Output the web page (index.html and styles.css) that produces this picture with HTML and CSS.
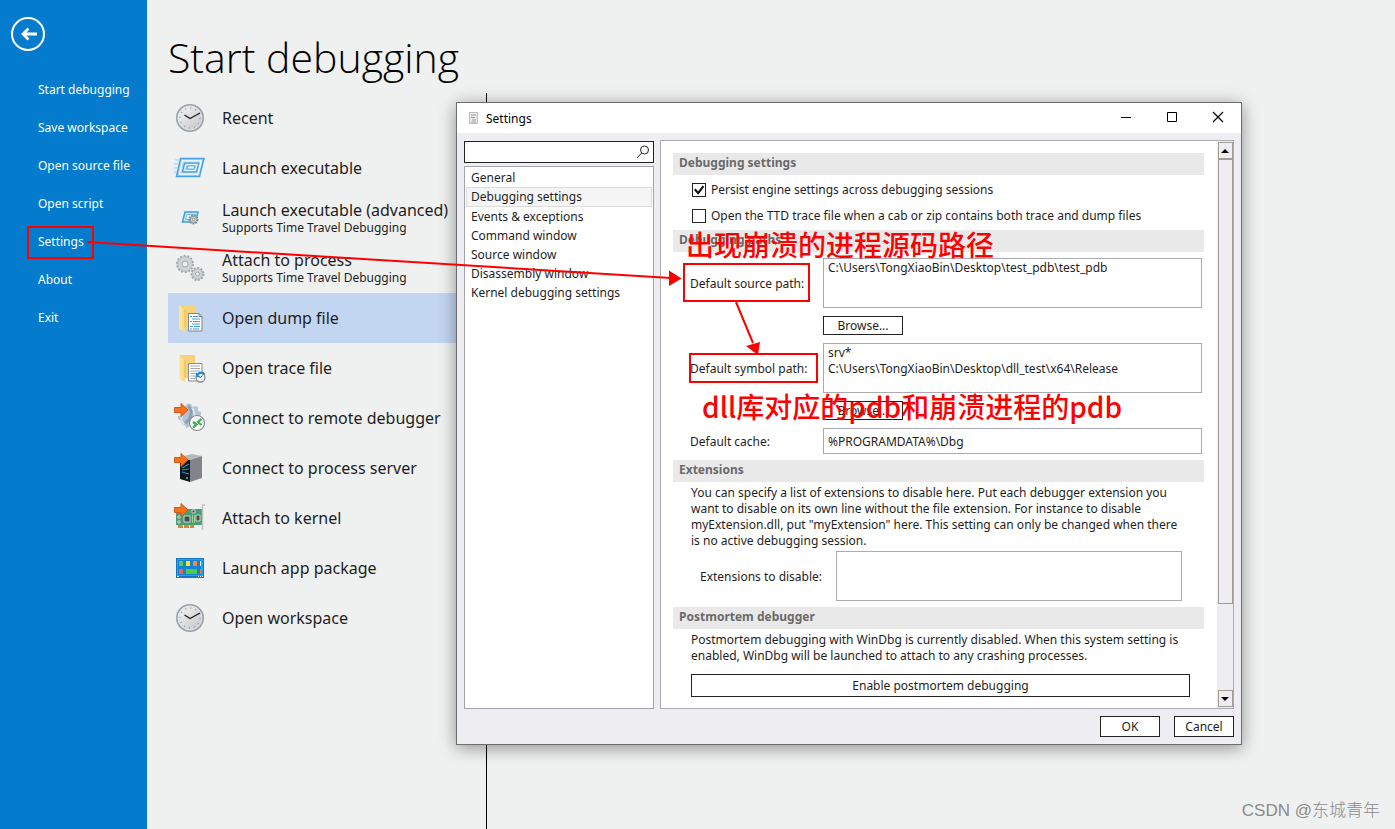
FILE: index.html
```html
<!DOCTYPE html>
<html lang="en">
<head>
<meta charset="utf-8">
<title>Start debugging</title>
<link rel="stylesheet" href="styles.css">
</head>
<body>
<div class="app">
  <nav class="sidebar">
    <button class="back" aria-label="Back">
      <svg width="34" height="34" viewBox="0 0 34 34"><circle cx="17" cy="17" r="16" fill="none" stroke="#fff" stroke-width="2"/><path d="M26 17H12M17.500 11.500L12 17L17.500 22.500" fill="none" stroke="#fff" stroke-width="2.800"/></svg>
    </button>
    <a href="#">Start debugging</a>
    <a href="#">Save workspace</a>
    <a href="#">Open source file</a>
    <a href="#">Open script</a>
    <a href="#">Settings</a>
    <a href="#">About</a>
    <a href="#">Exit</a>
  </nav>
  <main class="main">
    <h1>Start debugging</h1>
    <div class="columns">
      <div class="tasks">
        <button class="task"><svg class="icon"><use href="#clock"/></svg><span>Recent</span></button>
        <button class="task">
          <svg class="icon" viewBox="0 0 32 32"><g fill="none"><path d="M6.500 6.500H30L25.500 24.500H2.500Z" fill="#a8d6f5" stroke="#49a3e2" stroke-width="1.500"/><path d="M8.500 8.800H27.200L24 22.200H5.500Z" stroke="#fff" stroke-width="1.200"/><path d="M10.500 11H25L22.500 20H8.500Z" fill="#9dd0f3" stroke="#3797dc"/><path d="M12 12.500H23.200L21.200 18.500H10.500Z" stroke="#e4f3fc"/><path d="M14 14H21L20 17H13Z" fill="#fff" stroke="#58aee8"/><path d="M1 8h5M0 12h5M0 16h4M0 20h3" stroke="#9bcff4"/></g></svg>
          <span>Launch executable</span></button>
        <button class="task">
          <svg class="icon" viewBox="0 0 32 32"><path d="M11 10H24L21.500 20H8.500Z" fill="#c5e5f9" stroke="#3d9fe0" stroke-width="1.500"/><path d="M13 12.500H21L19.500 17.500H11.500Z" fill="#eaf6fd" stroke="#74bbea"/><g transform="translate(19.500 17.500)"><circle r="4" fill="#cfd4d6" stroke="#7f8689" stroke-width="2" stroke-dasharray="1.700 1"/><circle r="3.200" fill="#d9dddf" stroke="#899093"/><circle r="1.300" fill="#fff" stroke="#7f8689"/></g></svg>
          <span>Launch executable (advanced)<small>Supports Time Travel Debugging</small></span></button>
        <button class="task">
          <svg class="icon" viewBox="0 0 32 32"><g fill="#cfd5d7" stroke="#9ea5a8"><circle cx="11" cy="12" r="8" stroke-width="2" stroke-dasharray="2 1.600"/><circle cx="11" cy="12" r="7" stroke="#bfc5c8"/><circle cx="11" cy="12" r="3" fill="#f0f1f1"/><circle cx="23.500" cy="22" r="6" stroke-width="2" stroke-dasharray="2 1.400"/><circle cx="23.500" cy="22" r="5" stroke="#b5bbbe"/><circle cx="23.500" cy="22" r="2" fill="#f0f1f1"/></g></svg>
          <span>Attach to process<small>Supports Time Travel Debugging</small></span></button>
        <button class="task selected">
          <svg class="icon" viewBox="0 0 32 32"><use href="#folder"/><path d="M14.500 11.500H25L28 14.500V29H14.500Z" fill="#fff" stroke="#7d8184"/><path d="M25 11.500V14.500H28" fill="none" stroke="#7d8184"/><path d="M16 14.500h2M19 14.500h5M18 17h8M16 19.500h2M19 19.500h7M18 22h8M16 24.500h3M20 24.500h6M16 27h2M19 27h6" stroke="#3f9be0" stroke-width="1.200"/></svg>
          <span>Open dump file</span></button>
        <button class="task">
          <svg class="icon" viewBox="0 0 32 32"><use href="#folder"/><path d="M14.500 11.500H28V29H14.500Z" fill="#fff" stroke="#85898c"/><path d="M16.500 14h9.500M16.500 16.500h9.500M16.500 19h9.500M16.500 21.500h7M16.500 24h5M16.500 26.500h5" stroke="#a5a8aa"/><circle cx="26.500" cy="25.500" r="4.500" fill="#eef1f3" stroke="#858b90" stroke-width="1.300"/><path d="M26.500 25.500l2-2M26.500 25.500l-2-1" stroke="#555"/><path d="M24 22.500c1-2 4-3 6.500 0" fill="none" stroke="#2787d1" stroke-width="2.200"/><path d="M22 20v5h4z" fill="#2787d1"/></svg>
          <span>Open trace file</span></button>
        <button class="task">
          <svg class="icon" viewBox="0 0 32 32"><path d="M12 3l2-1.500 3 .5 1 3 3-1 3 1v4l3 1v3l-6 2-5 5-1 5-3 1-1-3-3-1-2-4-2-1v-3h3l1-4z" fill="#b5c3d2"/><path d="M14 4c5 4 4 12-3 17" fill="none" stroke="#8ea0b3" stroke-width="3"/><path d="M18 6c3 3 3 5 2 8M8 14c-1 3 0 6 2 8" fill="none" stroke="#dbe4eb" stroke-width="2"/><use href="#arrow"/><circle cx="23" cy="21" r="7.500" fill="#fff" stroke="#888" stroke-width="1.200"/><path d="M19 20l3.500 2.500-3.500 3M27.500 17l-3.500 3 3.500 3" fill="none" stroke="#32b34a" stroke-width="2.300"/></svg>
          <span>Connect to remote debugger</span></button>
        <button class="task">
          <svg class="icon" viewBox="0 0 32 32"><path d="M6 5L18 2L28 4L16 8Z" fill="#b6b9bc"/><path d="M6 6L16 8V30L6 27Z" fill="#111519"/><path d="M16 8L28 4V26L16 30Z" fill="#81858b"/><path d="M8 16l7-4M8 18l7-1M8 20l7 2" stroke="#218bc9" stroke-width="1.200"/><circle cx="13" cy="26" r="1" fill="#37c9e8"/><use href="#arrow"/></svg>
          <span>Connect to process server</span></button>
        <button class="task">
          <svg class="icon" viewBox="0 0 32 32"><path d="M2 7H28V23H2Z" fill="#4c9c78"/><path d="M4 24.500H20" stroke="#d18a35" stroke-width="3" stroke-dasharray="5 1"/><path d="M10 14h6v6h-6zM22 13h4v6h-4zM18 8h3v3h-3z" fill="#444b4c" stroke="#c7d5cf"/><path d="M4 14h2v2H4zM4 19h2v2H4z" fill="#333" stroke="#d7e8d6"/><path d="M18.500 13v8M20.500 13v8" stroke="#9bd091"/><path d="M31 3h-2.500v25" fill="none" stroke="#bfc2c3" stroke-width="1.500"/><use href="#arrow"/></svg>
          <span>Attach to kernel</span></button>
        <button class="task">
          <svg class="icon" viewBox="0 0 32 32"><path d="M2 6H30V26H2Z" fill="#1476c9"/><path d="M3 7H29V24H3Z" fill="#20a3f1"/><path d="M4 8h23v15H4z" fill="#1682d6"/><path d="M5 9h4v5H5z" fill="#55cf51"/><path d="M12 9h4v5h-4z" fill="#ffe316"/><path d="M19 9h4v5h-4z" fill="#ff8a2a"/><path d="M5 17h4v5H5z" fill="#f36444"/><path d="M12 17h11v5H12z" fill="#4bce45"/><path d="M26 9h1v5h-1z" fill="#e5f6ff"/><path d="M26 17h1v5h-1z" fill="#ff7a2a"/><path d="M3 24.500h2M24 24.500h1M26 24.500h1M28 24.500h1" stroke="#fff"/></svg>
          <span>Launch app package</span></button>
        <button class="task"><svg class="icon"><use href="#clock"/></svg><span>Open workspace</span></button>
      </div>
      <section class="formats"><h2>Supported file formats</h2></section>
    </div>
  </main>
</div>

<section class="dialog" role="dialog" aria-label="Settings">
  <header class="titlebar">
    <svg width="10" height="12" viewBox="0 0 10 12"><path d="M.500 .500h8v11h-8z" fill="#eee" stroke="#bbb"/><path d="M2 3h5M2 5.500h4M3 8h4M2 10h5" stroke="#999"/></svg>
    <span class="title">Settings</span>
    <button aria-label="Minimize"><svg width="12" height="12"><path d="M1 6.500h10" stroke="#000"/></svg></button>
    <button aria-label="Maximize"><svg width="12" height="12"><path d="M1.500 1.500h9v9h-9z" fill="none" stroke="#000"/></svg></button>
    <button aria-label="Close"><svg width="12" height="12"><path d="M1 1l10 10M11 1L1 11" stroke="#000" stroke-width="1.200"/></svg></button>
  </header>
  <div class="body">
    <div class="left">
      <div class="search"><input type="text" aria-label="Search settings"><svg width="14" height="14" viewBox="0 0 14 14"><circle cx="8.500" cy="5" r="4" fill="none" stroke="#222"/><path d="M5.700 8L1 13" stroke="#222"/></svg></div>
      <ul class="pages">
        <li>General</li>
        <li class="current">Debugging settings</li>
        <li>Events &amp; exceptions</li>
        <li>Command window</li>
        <li>Source window</li>
        <li>Disassembly window</li>
        <li>Kernel debugging settings</li>
      </ul>
    </div>
    <div class="panel">
      <form class="content">
        <h3>Debugging settings</h3>
        <div class="checks">
          <label><input type="checkbox" checked>Persist engine settings across debugging sessions</label>
          <label><input type="checkbox">Open the TTD trace file when a cab or zip contains both trace and dump files</label>
        </div>
        <h3>Debugging paths</h3>
        <div class="paths">
          <label for="src">Default source path:</label>
          <textarea id="src" spellcheck="false">C:\Users\TongXiaoBin\Desktop\test_pdb\test_pdb</textarea>
          <button type="button" class="btn browse">Browse...</button>
          <label for="sym">Default symbol path:</label>
          <textarea id="sym" spellcheck="false">srv*
C:\Users\TongXiaoBin\Desktop\dll_test\x64\Release</textarea>
          <button type="button" class="btn browse">Browse...</button>
          <label for="cache">Default cache:</label>
          <input id="cache" type="text" value="%PROGRAMDATA%\Dbg">
        </div>
        <h3>Extensions</h3>
        <p>You can specify a list of extensions to disable here. Put each debugger extension you<br>want to disable on its own line without the file extension. For instance to disable<br>myExtension.dll, put "myExtension" here. This setting can only be changed when there<br>is no active debugging session.</p>
        <div class="extensions"><label for="ext">Extensions to disable:</label><textarea id="ext"></textarea></div>
        <h3>Postmortem debugger</h3>
        <p>Postmortem debugging with WinDbg is currently disabled. When this system setting is<br>enabled, WinDbg will be launched to attach to any crashing processes.</p>
        <button type="button" class="btn enable">Enable postmortem debugging</button>
      </form>
      <div class="scrollbar">
        <button aria-label="Scroll up"><svg width="8" height="4"><path d="M0 4L4 0L8 4Z"/></svg></button>
        <div class="thumb"></div>
        <button aria-label="Scroll down"><svg width="8" height="4"><path d="M0 0H8L4 4Z"/></svg></button>
      </div>
    </div>
  </div>
  <footer><button class="btn">OK</button><button class="btn">Cancel</button></footer>
</section>

<svg class="markup" width="1395" height="829" viewBox="0 0 1395 829">
  <g fill="none" stroke="#f00" stroke-width="2"><path d="M28 227H93V258H28ZM684 264H809V301H684ZM690 354H817V382H690ZM87 242L671 278M736 302L753 343"/></g>
  <path d="M669 270.500L681.500 278.500L669 286ZM746 346L760 342L758 355Z" fill="#f00"/>
  <text x="686" y="256">出现崩溃的进程源码路径</text>
  <text x="702" y="418">dll库对应的pdb和崩溃进程的pdb</text>
</svg>
<div class="watermark">CSDN @东城青年</div>

<svg width="0" height="0" class="defs">
  <defs>
    <linearGradient id="face" x1="0" y1="0" x2="1" y2="1"><stop offset="0" stop-color="#f7f7f7"/><stop offset="1" stop-color="#bfc3c6"/></linearGradient>
    <linearGradient id="gold"><stop offset="0" stop-color="#ffe9a0"/><stop offset="1" stop-color="#f9d777"/></linearGradient>
    <symbol id="clock" viewBox="0 0 32 32"><circle cx="16" cy="16" r="13.200" fill="url(#face)" stroke="#98a2a8" stroke-width="1.600"/><circle cx="16" cy="16" r="11.700" fill="none" stroke="#dfe4e6"/><circle cx="16" cy="16" r="10" fill="none" stroke="#969b9e" stroke-width="1.500" stroke-dasharray="1 4.236"/><path d="M10.500 13L16 16.500L26 11" fill="none" stroke="#222" stroke-width="1.400"/></symbol>
    <symbol id="folder" viewBox="0 0 32 32"><path d="M5 3H21V26H9Z" fill="#f6d27a"/><path d="M5 3L11 8V30L5 27Z" fill="url(#gold)"/><path d="M11 8V26" stroke="#e9bf5b"/></symbol>
    <symbol id="arrow" viewBox="0 0 32 32"><path d="M.5 5.500H7V1.500L14 8L7 14.500V10.500H.5Z" fill="#f97316" stroke="#df5417"/></symbol>
  </defs>
</svg>
</body>
</html>
```

FILE: styles.css
```css
* { box-sizing: border-box; }
body { margin: 0; background: #eff0f0; color: #1e1e1e; font-family: "Noto Sans", "Noto Sans CJK SC", sans-serif; font-size: 12px; overflow: hidden; }
button, input, textarea { font: inherit; color: inherit; margin: 0; border-radius: 0; }
button { padding: 0; border: 0; background: none; }
h1, h2, h3, p, ul { margin: 0; padding: 0; }

.app { display: flex; min-height: 100vh; }
.sidebar { flex: 0 0 147px; background: #047bcd; display: flex; flex-direction: column; }
.back { width: 34px; height: 34px; margin: 17px 0 20px 11px; }
.back svg { display: block; }
.sidebar a { height: 38px; line-height: 38px; padding-left: 38px; color: #fff; text-decoration: none; white-space: nowrap; }

.main { flex: 1; display: flex; flex-direction: column; }
h1 { font: 300 41px/60px "Open Sans", "Noto Sans", sans-serif; color: #000; padding: 27px 0 6px 21px; }
.columns { flex: 1; display: flex; }
.tasks { width: 340px; padding-left: 21px; border-right: 1px solid #000; }
.task { display: flex; align-items: center; width: 100%; height: 50px; padding-left: 6px; gap: 16px; text-align: left; font-size: 16px; line-height: 20px; white-space: nowrap; }
.task small { display: block; font-size: 12px; line-height: 16px; }
.task.selected { background: #c3d6f1; }
.icon { width: 32px; height: 32px; flex: none; }
.formats { padding: 5px 16px; }
h2 { font-size: 14px; line-height: 20px; }

.dialog { position: absolute; left: 456px; top: 102px; right: 153px; background: #eeeef2; border: 1px solid #6e6e6e; box-shadow: 0 3px 16px rgba(0, 0, 0, .4); }
.titlebar { display: flex; align-items: center; height: 30px; background: #fff; padding-left: 12px; color: #000; }
.titlebar button { width: 46px; height: 30px; }
.title { flex: 1; padding-left: 7px; }
.body { display: flex; gap: 6px; padding: 7px 7px 0; }
.left { flex: 0 0 190px; min-width: 0; display: flex; flex-direction: column; padding-top: 1px; }
.search { display: flex; align-items: center; height: 22px; margin-bottom: 3px; padding-right: 3px; border: 1px solid #222; background: #fff; }
.search input { flex: 1; min-width: 0; border: 0; background: none; outline: none; }
.search svg { flex: none; }
.pages { flex: 1; list-style: none; background: #fff; border: 1px solid #a2a4ad; padding: 1px; }
.pages li { height: 19px; line-height: 19px; padding-left: 5px; border: 0 solid #dcdcdc; white-space: nowrap; }
.pages .current { height: 20px; line-height: 18px; border-width: 1px; padding-left: 4px; background: #f5f5f5; }

.panel { flex: 1; display: flex; background: #fff; border: 1px solid #a9aab2; min-width: 0; }
.content { flex: 1; min-width: 0; padding: 12px 13px 11px 12px; }
h3 { height: 22px; padding-left: 6px; background: #e9e9e9; color: #6a6a6a; font-size: 12px; line-height: 19px; }
.checks { padding: 2px 0 1px 19px; }
.checks label { display: flex; align-items: center; gap: 5px; height: 26px; line-height: 26px; white-space: nowrap; }
.checks input { appearance: none; width: 14px; height: 14px; border: 1px solid #222; background: #fff; }
.checks input:checked::before { content: ""; display: block; width: 12px; height: 12px; background: #111; clip-path: polygon(8% 50%, 22% 38%, 42% 62%, 80% 12%, 94% 22%, 44% 90%); }
textarea, #cache { display: block; width: 100%; resize: none; outline: none; background: #fff; border: 1px solid #a9aab2; padding: 1px 4px; line-height: 16px; overflow: hidden; }
textarea { height: 50px; }
#cache { height: 26px; }
.paths { display: grid; grid-template-columns: 133px 1fr; row-gap: 8px; padding: 6px 2px 6px 17px; align-items: center; white-space: nowrap; }
.btn { border: 1px solid #222; background: #fff; line-height: 18px; }
.browse { grid-column: 2; width: 80px; height: 19px; line-height: 17px; }
.paths textarea { white-space: pre; }
p { padding: 3px 0 2px 18px; line-height: 16px; white-space: nowrap; }
.extensions { display: flex; align-items: center; padding: 0 22px 6px 27px; }
.extensions label { flex: 0 0 136px; }
.enable { display: block; width: calc(100% - 32px); height: 23px; margin: 8px 0 0 18px; }
.scrollbar { width: 16px; display: flex; flex-direction: column; align-items: center; padding: 1px 0; background: #eeeef2; }
.scrollbar button { width: 15px; height: 17px; border: 1px solid #a39c94; display: grid; place-items: center; }
.thumb { width: 15px; height: 445px; border: 1px solid #a39c94; margin-bottom: auto; }
footer { display: flex; justify-content: flex-end; gap: 14px; padding: 7px; }
footer .btn { width: 60px; height: 21px; }

.markup { position: absolute; left: 0; top: 0; pointer-events: none; }
.markup text { font: 500 28px "Noto Sans CJK SC", sans-serif; fill: #f00; }
.watermark { position: absolute; right: 15px; bottom: 6px; font: 300 17px/24px "Liberation Sans", "Noto Sans CJK SC", sans-serif; color: #8b8b8b; }
.defs { position: absolute; }
```
